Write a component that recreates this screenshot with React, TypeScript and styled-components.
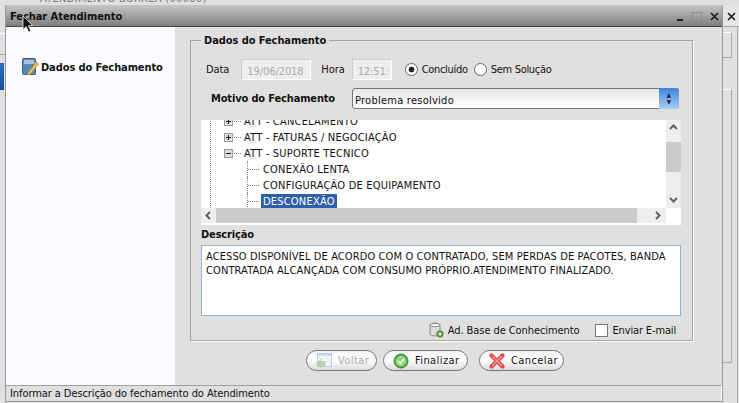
import * as React from "react"
import styled, { createGlobalStyle } from "styled-components"

const GlobalStyle = createGlobalStyle`
  html, body {
    margin: 0;
    padding: 0;
    width: 739px;
    height: 403px;
    overflow: hidden;
    background: #e0e0e0;
  }
  body {
    font-family: "DejaVu Sans Condensed", "DejaVu Sans", sans-serif;
    font-size: 11px;
    letter-spacing: -0.08px;
    color: #111;
  }
`

function NotebookIcon() {
  return <svg width="18" height="18" viewBox="0 0 18 18">
    <rect x="0.5" y="0.5" width="13" height="16" rx="1" fill="#5b86b8" stroke="#3a5f8c" />
    <rect x="2" y="2" width="10" height="4" fill="#a9c4e0" />
    <path d="M6 15 L14 4 L16.5 6 L8.5 16 L5.5 17 Z" fill="#f2c14e" stroke="#b9811f" strokeWidth="0.7" />
  </svg>
}

function DatabaseIcon() {
  return <svg width="15" height="16" viewBox="0 0 15 16">
    <path d="M1 3 C1 0.5 11 0.5 11 3 L11 12 C11 14.5 1 14.5 1 12 Z" fill="#dcdcdc" stroke="#8a8a8a" />
    <ellipse cx="6" cy="3" rx="5" ry="1.7" fill="#f2f2f2" stroke="#8a8a8a" />
    <circle cx="11" cy="12" r="3.3" fill="#5a9a3c" stroke="#3f7a2a" strokeWidth="0.6" />
    <path d="M9.2 12 H12.8 M11 10.2 V13.8" stroke="#fff" strokeWidth="1.1" />
  </svg>
}

function BackIcon() {
  return <svg width="16" height="17" viewBox="0 0 16 17">
    <rect x="1.5" y="1.5" width="14" height="13" fill="#f0f3f8" stroke="#bccbdd" />
    <rect x="2" y="2" width="13" height="2" fill="#cfdcec" />
    <path d="M0.5 11.5 L5 7 V9.5 H9 V13.5 H5 V16 Z" fill="#b9d6a8" stroke="#a4c594" strokeWidth="0.5" />
  </svg>
}

function CheckIcon() {
  return <svg width="16" height="16" viewBox="0 0 16 16">
    <circle cx="8" cy="8" r="7" fill="#58b045" stroke="#3f8a32" />
    <circle cx="8" cy="8" r="4.4" fill="#8fcf76" stroke="#d8efd0" strokeWidth="0.8" />
    <path d="M5.3 8 L7.4 10.2 L10.8 6" fill="none" stroke="#fff" strokeWidth="1.7" />
  </svg>
}

function CrossIcon() {
  return <svg width="16" height="16" viewBox="0 0 16 16">
    <path d="M2.5 2.5 L13.5 13.5 M13.5 2.5 L2.5 13.5" stroke="#e0484f" strokeWidth="4.2" strokeLinecap="round" />
    <path d="M3.5 3.5 L12.5 12.5 M12.5 3.5 L3.5 12.5" stroke="#f79a9d" strokeWidth="1.4" strokeLinecap="round" />
  </svg>
}

function CursorIcon() {
  return <svg width="12" height="19" viewBox="0 0 12 19">
    <path d="M1 1 L1 14.5 L4.2 11.6 L6.6 17 L8.8 16 L6.4 10.8 L10.8 10.6 Z" fill="#111" stroke="#eee" strokeWidth="0.8" />
  </svg>
}

function CloseIcon() {
  return <svg width="9" height="9" viewBox="0 0 9 9">
    <path d="M1 1 L8 8 M8 1 L1 8" stroke="#1a1a1a" strokeWidth="1.6" />
  </svg>
}

function Expander({ open }: { open: boolean }) {
  return <ExpanderBox>
    <svg width="7" height="7" viewBox="0 0 7 7">
      <path d="M1 3.5 H6" stroke="#111" />
      {!open && <path d="M3.5 1 V6" stroke="#111" />}
    </svg>
  </ExpanderBox>
}

function Chevron({ d }: { d: string }) {
  return <svg width="9" height="9" viewBox="0 0 9 9">
    <path d={d} fill="none" stroke="#606060" strokeWidth="2" />
  </svg>
}

export default function App() {
  return <Page>
    <GlobalStyle />
    <TopStrip>
      <TopStripText>ATENDIMENTO BORREA (00000)</TopStripText>
    </TopStrip>
    <Middle>
      <LeftStrip>
        <LeftPanel />
        <LeftBlue />
      </LeftStrip>
      <Dialog>
        <TitleBar>
          <TitleText>Fechar Atendimento</TitleText>
          <WindowControls>
            <MinimizeGlyph />
            <MaximizeGlyph />
            <CloseIcon />
          </WindowControls>
        </TitleBar>
        <Body>
          <Sidebar>
            <SidebarItem>
              <NotebookIcon />
              Dados do Fechamento
            </SidebarItem>
          </Sidebar>
          <Main>
            <Fieldset>
              <Legend>Dados do Fechamento</Legend>
              <DateRow>
                <FieldLabel $gap={12}>Data</FieldLabel>
                <ReadonlyField $width={70}>19/06/2018</ReadonlyField>
                <FieldLabel $gap={7}>Hora</FieldLabel>
                <ReadonlyField $width={40}>12:51:</ReadonlyField>
                <RadioGroup>
                  <RadioOption><Radio $checked />Concluído</RadioOption>
                  <RadioOption><Radio />Sem Solução</RadioOption>
                </RadioGroup>
              </DateRow>
              <MotivoRow>
                <MotivoLabel>Motivo do Fechamento</MotivoLabel>
                <SelectBox>
                  Problema resolvido
                  <SelectStepper>
                    <span>▲</span>
                    <span>▼</span>
                  </SelectStepper>
                </SelectBox>
              </MotivoRow>
              <TreePanel>
                <TreeArea>
                  <TreeRows>
                    <TreeGuide>
                      <ClippedRow><Expander open={false} /><Dots />ATT - CANCELAMENTO</ClippedRow>
                      <TreeRow><Expander open={false} /><Dots />ATT - FATURAS / NEGOCIAÇÃO</TreeRow>
                      <TreeRow><Expander open /><Dots />ATT - SUPORTE TECNICO</TreeRow>
                      <ChildRow><ChildDots />CONEXÃO LENTA</ChildRow>
                      <ChildRow><ChildDots />CONFIGURAÇÃO DE EQUIPAMENTO</ChildRow>
                      <ChildRow><ChildDots /><Selected>DESCONEXÃO</Selected></ChildRow>
                    </TreeGuide>
                  </TreeRows>
                  <VScroll>
                    <Chevron d="M1 6 L4.5 2.5 L8 6" />
                    <VThumb />
                    <VTrackFill />
                    <Chevron d="M1 3 L4.5 6.5 L8 3" />
                  </VScroll>
                </TreeArea>
                <HScroll>
                  <HCap><Chevron d="M6 1 L2.5 4.5 L6 8" /></HCap>
                  <HThumb />
                  <HTrack><Chevron d="M3 1 L6.5 4.5 L3 8" /></HTrack>
                  <ScrollCorner />
                </HScroll>
              </TreePanel>
              <DescriptionLabel>Descrição</DescriptionLabel>
              <Description>
                ACESSO DISPONÍVEL DE ACORDO COM O CONTRATADO, SEM PERDAS DE PACOTES, BANDA CONTRATADA ALCANÇADA COM CONSUMO PRÓPRIO.ATENDIMENTO FINALIZADO.
              </Description>
              <OptionsRow>
                <KnowledgeLink><DatabaseIcon />Ad. Base de Conhecimento</KnowledgeLink>
                <CheckboxLabel><Checkbox />Enviar E-mail</CheckboxLabel>
              </OptionsRow>
            </Fieldset>
            <ButtonRow>
              <PillButton $disabled $width={71}><BackIcon />Voltar</PillButton>
              <PillButton $width={85}><CheckIcon />Finalizar</PillButton>
              <PillButton $width={85} $offset={5}><CrossIcon />Cancelar</PillButton>
            </ButtonRow>
          </Main>
        </Body>
        <StatusBar>Informar a Descrição do fechamento do Atendimento</StatusBar>
      </Dialog>
      <RightStrip>
        <RightHeader><CloseIcon /></RightHeader>
        <RightColumn>
          <RightPanel $height={24} $top={5} />
          <RightPanel $height={272} $top={31} />
        </RightColumn>
      </RightStrip>
    </Middle>
    <Cursor><CursorIcon /></Cursor>
  </Page>
}

const Page = styled.div`
  position: relative;
  width: 739px;
  height: 403px;
  display: flex;
  flex-direction: column;
  overflow: hidden;
  background: #e0e0e0;
`

const TopStrip = styled.div`
  height: 5px;
  flex: none;
  overflow: hidden;
  padding-left: 40px;
  color: #777;
  letter-spacing: 0.3px;
`

const TopStripText = styled.div`
  margin-top: -8px;
  white-space: nowrap;
`

const Middle = styled.div`
  flex: 1;
  min-height: 0;
  display: flex;
`

const LeftStrip = styled.div`
  width: 5px;
  flex: none;
  padding-top: 28px;
  box-sizing: border-box;
`

const LeftPanel = styled.div`
  height: 22px;
  border-top: 1px solid #fff;
  border-bottom: 1px solid #aaa;
  box-sizing: border-box;
`

const LeftBlue = styled.div`
  width: 4px;
  height: 27px;
  margin-top: 8px;
  background: linear-gradient(#2a6fc4, #1b4f9c);
`

const Dialog = styled.div`
  width: 718px;
  height: 397px;
  flex: none;
  box-sizing: border-box;
  display: flex;
  flex-direction: column;
  background: #e0e0e0;
  border-right: 1px solid #999;
  border-bottom: 1px solid #999;
  border-left: 1px solid #999;
`

const TitleBar = styled.div`
  height: 22px;
  flex: none;
  display: flex;
  align-items: center;
  justify-content: space-between;
  padding: 2px 3px 0 4px;
  background: linear-gradient(#c6c6c6, #7f7f7f);
  border-bottom: 1px solid #444;
  box-sizing: border-box;
`

const TitleText = styled.span`
  font-weight: bold;
  letter-spacing: -0.05px;
`

const WindowControls = styled.div`
  display: flex;
  align-items: center;
  gap: 8px;
`

const MinimizeGlyph = styled.span`
  width: 6px;
  height: 2px;
  margin-top: 7px;
  margin-right: 1px;
  background: #222;
`

const MaximizeGlyph = styled.span`
  width: 8px;
  height: 8px;
  border: 1px solid #8c8c8c;
`

const Body = styled.div`
  flex: 1;
  min-height: 0;
  display: flex;
`

const Sidebar = styled.div`
  width: 169px;
  flex: none;
  background: #fafbff;
  padding: 31px 0 0 16px;
  box-sizing: border-box;
`

const SidebarItem = styled.div`
  display: flex;
  align-items: center;
  gap: 1px;
  font-weight: bold;
  letter-spacing: -0.1px;
`

const Main = styled.div`
  flex: 1;
  padding: 7px 0 0 15px;
`

const Fieldset = styled.fieldset`
  width: 492px;
  height: 306px;
  margin: 0;
  padding: 0 0 0 10px;
  box-sizing: content-box;
  border: 1px solid #a5a5a5;
  border-right-color: #fff;
  border-bottom-color: #fff;
  box-shadow: inset -1px -1px 0 #a5a5a5;
`

const Legend = styled.legend`
  font-weight: bold;
  padding: 0 3px;
  margin-left: 0;
`

const DateRow = styled.div`
  display: flex;
  align-items: center;
  height: 22px;
  margin-top: 11px;
  padding-left: 5px;
`

const FieldLabel = styled.span<{ $gap: number }>`
  margin-right: ${p => p.$gap}px;
`

const ReadonlyField = styled.div<{ $width: number }>`
  width: ${p => p.$width}px;
  height: 21px;
  line-height: 23px;
  box-sizing: border-box;
  margin-right: 10px;
  padding-left: 5px;
  overflow: hidden;
  background: #eee;
  border: 1px solid #ccc;
  border-right-color: #fff;
  border-bottom-color: #fff;
  color: #aaa;
`

const RadioGroup = styled.div`
  display: flex;
  align-items: center;
  gap: 6px;
  margin-left: 3px;
  letter-spacing: -0.3px;
`

const RadioOption = styled.div`
  display: flex;
  align-items: center;
  gap: 4px;
`

const Radio = styled.span<{ $checked?: boolean }>`
  width: 11px;
  height: 11px;
  border: 1px solid #666;
  border-radius: 50%;
  background: ${p => p.$checked
    ? "radial-gradient(circle, #222 0 2.6px, #fff 3.2px)"
    : "#fff"};
`

const MotivoRow = styled.div`
  display: flex;
  align-items: center;
  height: 22px;
  margin-top: 7px;
  padding-left: 10px;
`

const BoldLabel = styled.div`
  font-weight: bold;
  letter-spacing: -0.15px;
`

const MotivoLabel = styled(BoldLabel)`
  width: 141px;
  flex: none;
`

const SelectBox = styled.div`
  position: relative;
  width: 327px;
  height: 21px;
  line-height: 23px;
  padding-left: 2px;
  box-sizing: border-box;
  letter-spacing: 0.25px;
  border: 1px solid #777;
  border-radius: 3px;
  background: linear-gradient(#e6e6e6, #fff);
`

const SelectStepper = styled.div`
  position: absolute;
  right: -1px;
  top: -1px;
  width: 20px;
  height: 21px;
  display: flex;
  flex-direction: column;
  align-items: center;
  justify-content: center;
  font-size: 6px;
  line-height: 7px;
  color: #123;
  border-radius: 0 3px 3px 0;
  background: linear-gradient(#3f82dc, #a9cdf5);
`

const TreePanel = styled.div`
  width: 480px;
  height: 105px;
  margin-top: 11px;
  background: #fff;
  letter-spacing: 0.2px;
`

const TreeArea = styled.div`
  display: flex;
  height: 88px;
`

const TreeRows = styled.div`
  flex: 1;
  overflow: hidden;
  padding-left: 9px;
`

const TreeGuide = styled.div`
  height: calc(100% + 7px);
  padding-left: 13px;
  border-left: 1px dotted #888;
`

const TreeRow = styled.div`
  display: flex;
  align-items: center;
  height: 16px;
  white-space: nowrap;
`

const ClippedRow = styled(TreeRow)`
  margin-top: -7px;
`

const ChildRow = styled(TreeRow)`
  margin-left: 23px;
  border-left: 1px dotted #888;
`

const ExpanderBox = styled.span`
  width: 9px;
  height: 9px;
  box-sizing: border-box;
  flex: none;
  display: inline-flex;
  background: #ddd;
  border: 1px solid #999;
`

const Dots = styled.span`
  width: 7px;
  margin: 0 3px 0 1px;
  border-top: 1px dotted #888;
`

const ChildDots = styled.span`
  width: 11px;
  margin-right: 4px;
  border-top: 1px dotted #888;
`

const Selected = styled.span`
  line-height: 15px;
  margin-left: -2px;
  padding: 0 2px;
  background: #2f5fa8;
  color: #fff;
`

const VScroll = styled.div`
  width: 15px;
  flex: none;
  display: flex;
  flex-direction: column;
  align-items: center;
  padding: 3px 0 4px;
  box-sizing: border-box;
  background: #eee;
`

const VThumb = styled.div`
  width: 15px;
  height: 30px;
  margin-top: 10px;
  background: #cbcbcb;
`

const VTrackFill = styled.div`
  flex: 1;
`

const HScroll = styled.div`
  display: flex;
  height: 15px;
  background: #eee;
`

const HCap = styled.div`
  width: 15px;
  flex: none;
  display: flex;
  align-items: center;
  justify-content: center;
`

const HThumb = styled.div`
  flex: 1;
  background: #cbcbcb;
`

const HTrack = styled.div`
  width: 29px;
  flex: none;
  display: flex;
  align-items: center;
  justify-content: flex-end;
  padding-right: 4px;
  box-sizing: border-box;
`

const ScrollCorner = styled.div`
  width: 15px;
  flex: none;
  background: #fff;
`

const DescriptionLabel = styled(BoldLabel)`
  margin-top: 3px;
`

const Description = styled.div`
  width: 480px;
  height: 71px;
  margin-top: 4px;
  padding: 4px 4px;
  box-sizing: border-box;
  line-height: 14px;
  letter-spacing: 0.11px;
  background: #fff;
  border: 1px solid #8fb4d8;
`

const OptionsRow = styled.div`
  display: flex;
  align-items: center;
  justify-content: flex-end;
  gap: 15px;
  width: 475px;
  margin-top: 6px;
`

const KnowledgeLink = styled.div`
  display: flex;
  align-items: center;
  gap: 4px;
`

const CheckboxLabel = styled.div`
  display: flex;
  align-items: center;
  gap: 5px;
  letter-spacing: -0.15px;
`

const Checkbox = styled.span`
  width: 11px;
  height: 11px;
  background: #fff;
  border: 1px solid #777;
`

const ButtonRow = styled.div`
  display: flex;
  gap: 6px;
  padding-left: 116px;
  margin-top: 8px;
`

const PillButton = styled.div<{ $disabled?: boolean; $width: number; $offset?: number }>`
  width: ${p => p.$width}px;
  height: 21px;
  display: flex;
  align-items: center;
  gap: 6px;
  margin-left: ${p => p.$offset ?? 0}px;
  padding-left: 9px;
  box-sizing: border-box;
  letter-spacing: 0.4px;
  border: 1px solid #777;
  border-radius: 11px;
  background: linear-gradient(#f4f4f4, #fff 45%, #ddd);
  color: ${p => p.$disabled ? "#aaa" : "#111"};
`

const StatusBar = styled.div`
  height: 16px;
  flex: none;
  line-height: 16px;
  padding-left: 4px;
  box-sizing: border-box;
  border-top: 1px solid #a0a0a0;
  border-right: 1px solid #fff;
`

const RightStrip = styled.div`
  flex: 1;
  display: flex;
  flex-direction: column;
`

const RightHeader = styled.div`
  height: 22px;
  flex: none;
  display: flex;
  align-items: center;
  padding: 2px 0 0 4px;
  box-sizing: border-box;
  background: #e6e6e6;
  border-bottom: 1px solid #aaa;
`

const RightColumn = styled.div`
  flex: 1;
  margin-right: 1px;
  border-right: 1px solid #aaa;
`

const RightPanel = styled.div<{ $height: number; $top: number }>`
  width: 8px;
  height: ${p => p.$height}px;
  margin-top: ${p => p.$top}px;
  border-top: 1px solid #fff;
  border-right: 1px solid #aaa;
  border-bottom: 1px solid #aaa;
`

const Cursor = styled.div`
  position: absolute;
  left: 22px;
  top: 15px;
  height: 19px;
`
